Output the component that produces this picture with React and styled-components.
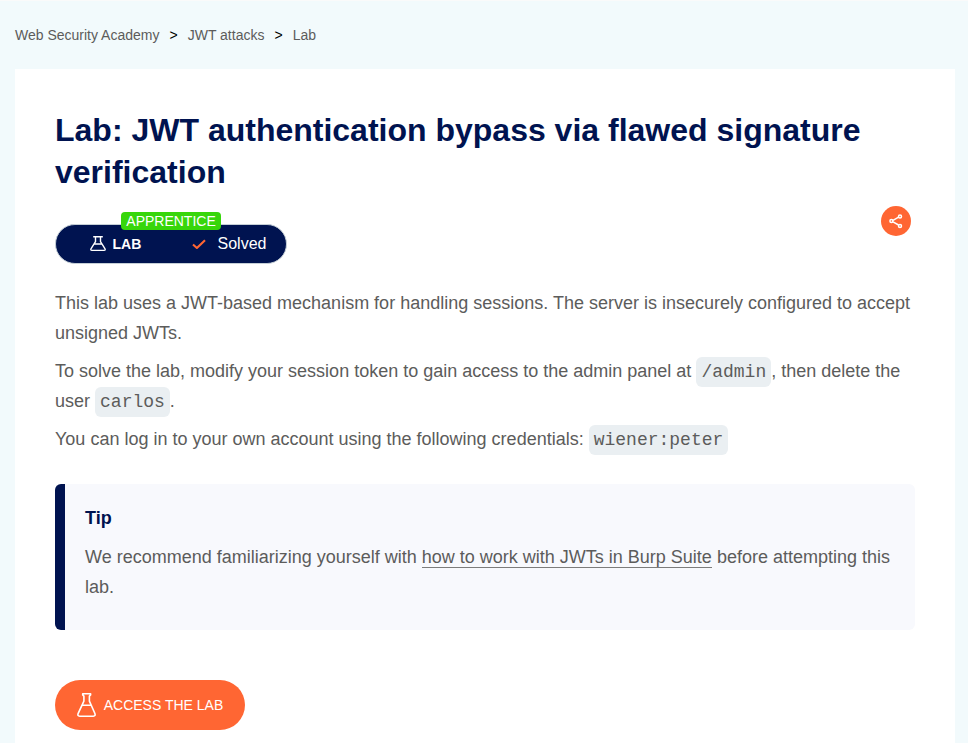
import React from "react";
import styled, { createGlobalStyle } from "styled-components";

const GlobalStyle = createGlobalStyle`
  * { box-sizing: border-box; }
  html, body { margin: 0; height: 743px; overflow: hidden; background: #f2fafc; }
  body { font-family: "Liberation Sans", Arial, sans-serif; color: #5c5c5b; }
`;

const Page = styled.div`
  height: 743px;
  overflow: hidden;
  border-top: 1px solid #fafafa;
  padding: 0 13px 0 15px;
`;

const Breadcrumbs = styled.nav`
  display: flex;
  align-items: center;
  height: 68px;
  gap: 10px;
  font-size: 14px;
  line-height: 20px;
`;

const Crumb = styled.a`
  color: #5c5c5b;
`;

const Separator = styled.span`
  color: #000;
`;

const Card = styled.main`
  height: 700px;
  background: #fff;
  padding: 40px;
`;

const Title = styled.h1`
  margin: 0;
  color: #001350;
  font-size: 32px;
  line-height: 42px;
  font-weight: 700;
`;

const StatusRow = styled.div`
  display: flex;
  align-items: flex-start;
  justify-content: space-between;
  height: 95px;
  padding-top: 31px;
`;

const Pill = styled.div`
  position: relative;
  display: flex;
  align-items: center;
  width: 232px;
  height: 40px;
  padding-left: 33.5px;
  border: 1px solid #c5cfd6;
  border-radius: 20px;
  background: #001350;
  color: #fff;
`;

const Level = styled.span`
  position: absolute;
  left: 65px;
  top: -13px;
  width: 100px;
  height: 18px;
  padding-left: 5.3px;
  border-radius: 4px;
  background: #37d60b;
  font-size: 14px;
  line-height: 18px;
`;

const LabLabel = styled.strong`
  width: 79px;
  margin-left: 7px;
  font-size: 14px;
`;

const Solved = styled.span`
  margin-left: 12px;
  font-size: 16px;
`;

const ShareButton = styled.button`
  display: flex;
  align-items: center;
  justify-content: center;
  width: 30px;
  height: 30px;
  margin: -18px 4px 0 0;
  padding: 0;
  border: 0;
  border-radius: 50%;
  background: #ff6633;
`;

const Paragraph = styled.p`
  margin: 0 0 ${(p) => (p.$last ? 0 : 8)}px;
  font-size: 18px;
  line-height: 30px;
`;

const Code = styled.code`
  padding: 5px;
  border-radius: 6px;
  background: #eaeff2;
  font-family: "Liberation Mono", monospace;
  font-size: 18px;
  line-height: 1;
`;

const Tip = styled.aside`
  height: 146px;
  margin-top: 30px;
  padding: 19px 20px 0;
  border-left: 10px solid #001350;
  border-radius: 6px;
  background: #f8f9fd;
`;

const TipTitle = styled.h4`
  margin: 0 0 9px;
  color: #001350;
  font-size: 18px;
  line-height: 30px;
`;

const TextLink = styled.a`
  border-bottom: 1px solid #7c7c7b;
`;

const AccessButton = styled.button`
  display: flex;
  align-items: center;
  gap: 6.7px;
  width: 190px;
  height: 50px;
  margin-top: 50px;
  padding: 0 0 0 22px;
  border: 0;
  border-radius: 25px;
  background: #ff6633;
  color: #fff;
  font: 14px "Liberation Sans", Arial, sans-serif;
  white-space: nowrap;
`;

const Icon = styled.svg`
  display: block;
  flex: none;
  fill: none;
  stroke: ${(p) => p.$color || "#fff"};
  stroke-linejoin: round;
  stroke-linecap: ${(p) => p.$cap || "butt"};
`;

function SmallFlask() {
  return (
    <Icon width="16" height="16" viewBox="0 0 16 16" strokeWidth="1.4">
      <path d="M3.2.8h9.6M5.5.8v4.9L1.1 12.7Q.2 14.4 2 14.4h12q1.8 0 .9-1.7L10.5 5.7V.8M4.3 8h7.4" />
    </Icon>
  );
}

function LargeFlask() {
  return (
    <Icon width="20" height="26" viewBox="0 0 20 26" strokeWidth="1.6" $cap="round">
      <path d="M5.7 1.7h7.9M5.7 1.7v1.2l1.2 1.2v5L1.2 21.3q-1.1 2.9 1.5 2.9h13.6q2.6 0 1.5-2.9L12.4 9.1v-5l1.2-1.2V1.7M5.2 13.2h8.8" />
    </Icon>
  );
}

function Check() {
  return (
    <Icon width="14" height="12" viewBox="0 0 14 12" $color="#ff6633" strokeWidth="2.1">
      <path d="M1 6.5l3.9 3.5L13 2.2" />
    </Icon>
  );
}

function Share() {
  return (
    <Icon width="14" height="16" viewBox="0 0 14 16" strokeWidth="1.5">
      <path d="M4 7.4l5.6-3.2M4 8.8l5.6 3.2" />
      <circle cx="2.4" cy="8.1" r="1.5" />
      <circle cx="11" cy="3.4" r="1.5" />
      <circle cx="11" cy="12.9" r="1.5" />
    </Icon>
  );
}

export default function App() {
  return (
    <>
      <GlobalStyle />
      <Page>
        <Breadcrumbs>
          <Crumb>Web Security Academy</Crumb>
          <Separator>&gt;</Separator>
          <Crumb>JWT attacks</Crumb>
          <Separator>&gt;</Separator>
          <Crumb>Lab</Crumb>
        </Breadcrumbs>
        <Card>
          <Title>Lab: JWT authentication bypass via flawed signature verification</Title>
          <StatusRow>
            <Pill>
              <Level>APPRENTICE</Level>
              <SmallFlask />
              <LabLabel>LAB</LabLabel>
              <Check />
              <Solved>Solved</Solved>
            </Pill>
            <ShareButton aria-label="Share"><Share /></ShareButton>
          </StatusRow>
          <Paragraph>
            This lab uses a JWT-based mechanism for handling sessions. The server is insecurely configured to accept unsigned JWTs.
          </Paragraph>
          <Paragraph>
            To solve the lab, modify your session token to gain access to the admin panel at <Code>/admin</Code>, then delete the user <Code>carlos</Code>.
          </Paragraph>
          <Paragraph $last>
            You can log in to your own account using the following credentials: <Code>wiener:peter</Code>
          </Paragraph>
          <Tip>
            <TipTitle>Tip</TipTitle>
            <Paragraph $last>
              We recommend familiarizing yourself with <TextLink>how to work with JWTs in Burp Suite</TextLink> before attempting this lab.
            </Paragraph>
          </Tip>
          <AccessButton><LargeFlask />ACCESS THE LAB</AccessButton>
        </Card>
      </Page>
    </>
  );
}
